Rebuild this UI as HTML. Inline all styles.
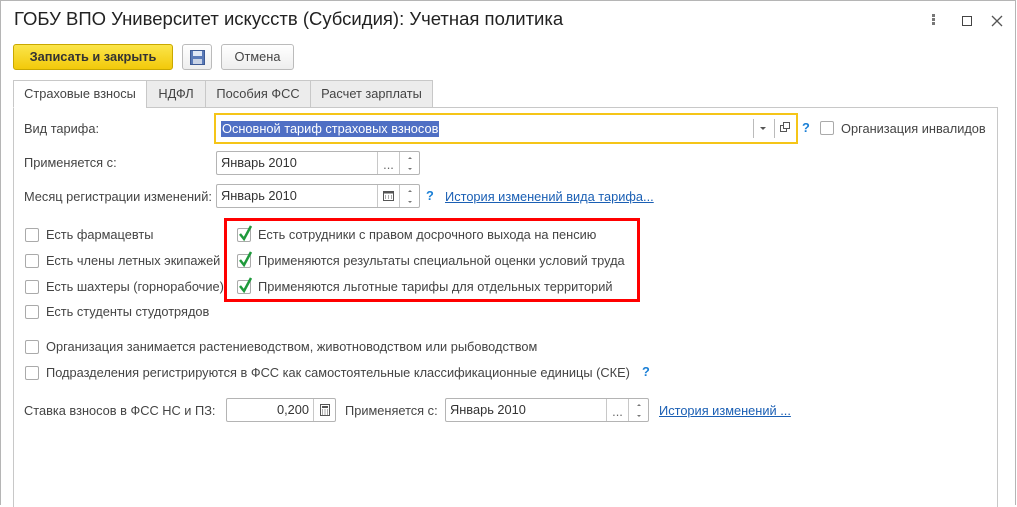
<!DOCTYPE html>
<html><head><meta charset="utf-8"><style>
*{box-sizing:border-box}
body{margin:0;width:1017px;height:505px;background:#fff;font-family:"Liberation Sans",sans-serif;font-size:12.8px;color:#444;position:relative;overflow:hidden}
.a{position:absolute;white-space:nowrap}
.win{position:absolute;left:0;top:0;width:1016px;height:505px;border:1px solid #b5b5b5;border-bottom:none}
.panel{position:absolute;left:13px;top:107px;width:985px;height:400px;border:1px solid #c8c8c8;border-bottom:none}
.tab{position:absolute;top:80px;height:28px;border:1px solid #c8c8c8;background:#ececec;text-align:center;line-height:26px;color:#444}
.tab.on{background:#fff;border-bottom-color:#fff;height:28px}
.inp{position:absolute;border:1px solid #b4b4b4;border-radius:2px;background:#fff;height:24px;line-height:22px;padding-left:4px;color:#333}
.btn{position:absolute;top:0;bottom:0;border-left:1px solid #c8c8c8;text-align:center;color:#666}
.cb{position:absolute;width:14px;height:14px;border:1px solid #aaa;border-radius:2px;background:#fff}
.lnk{color:#1a5fb4;text-decoration:underline}
.q{color:#1a7fd6;font-weight:bold}
</style></head><body>
<div class="win"></div>
<div class="a" style="left:14px;top:8px;font-size:18.5px;color:#222">ГОБУ ВПО Университет искусств (Субсидия): Учетная политика</div>
<div class="a" style="left:932px;top:14px;width:3px;height:3px;background:#777;box-shadow:0 4px 0 #777,0 8px 0 #777"></div>
<div class="a" style="left:962px;top:16px;width:10px;height:10px;border:1.5px solid #444"></div>
<svg class="a" style="left:991px;top:15px" width="12" height="12"><path d="M1 1L11 11M11 1L1 11" stroke="#555" stroke-width="1.3"/></svg>

<div class="a" style="left:13px;top:44px;width:160px;height:26px;background:linear-gradient(#fbe54a,#f2c90a);border:1px solid #c9a800;border-radius:3px;font-weight:bold;color:#333;text-align:center;line-height:24px">Записать и закрыть</div>
<div class="a" style="left:182px;top:44px;width:30px;height:26px;border:1px solid #bbb;border-radius:3px;background:linear-gradient(#fff,#eee)">
<svg style="position:absolute;left:7px;top:5px" width="15" height="15"><rect x="0.5" y="0.5" width="14" height="14" fill="#5a7ab8" stroke="#3d5a95"/><rect x="3" y="1" width="9" height="5" fill="#dfe7f5"/><rect x="3" y="9" width="9" height="5" fill="#c9d3e6"/></svg></div>
<div class="a" style="left:221px;top:44px;width:73px;height:26px;border:1px solid #bbb;border-radius:3px;background:linear-gradient(#fff,#eee);text-align:center;line-height:24px;color:#444">Отмена</div>

<div class="panel"></div>
<div class="tab on" style="left:13px;width:134px">Страховые взносы</div>
<div class="tab" style="left:146px;width:60px">НДФЛ</div>
<div class="tab" style="left:205px;width:106px">Пособия ФСС</div>
<div class="tab" style="left:310px;width:123px">Расчет зарплаты</div>

<div class="a" style="left:24px;top:121px">Вид тарифа:</div>
<div class="a" style="left:214px;top:113px;width:584px;height:31px;border:2px solid #f5c518;background:#fff">
<span style="position:absolute;left:5px;top:6px;background:#4f6fc4;color:#fff;line-height:16px;padding:0 1px">Основной тариф страховых взносов</span>
<div style="position:absolute;left:537px;top:4px;width:1px;height:19px;background:#bbb"></div>
<svg style="position:absolute;left:543px;top:11px" width="8" height="5"><path d="M1 1H7L4 4Z" fill="#555"/></svg>
<div style="position:absolute;left:558px;top:4px;width:1px;height:19px;background:#bbb"></div>
<svg style="position:absolute;left:564px;top:7px" width="11" height="11"><rect x="3.5" y="0.5" width="6" height="6" fill="none" stroke="#555"/><path d="M3.5 3.5H0.5V9.5H6.5V6.5" fill="none" stroke="#555"/></svg>
</div>
<div class="a q" style="left:802px;top:120px">?</div>
<div class="cb" style="left:820px;top:121px"></div>
<div class="a" style="left:841px;top:121px">Организация инвалидов</div>

<div class="a" style="left:24px;top:155px">Применяется с:</div>
<div class="inp" style="left:216px;top:151px;width:204px">Январь 2010
<div class="btn" style="left:160px;width:22px;line-height:26px">...</div>
<div class="btn" style="left:182px;width:21px"><svg style="position:absolute;left:7px;top:4px" width="6" height="16"><path d="M1 3H5L3 1ZM1 12H5L3 14Z" fill="#777"/></svg></div></div>

<div class="a" style="left:24px;top:189px">Месяц регистрации изменений:</div>
<div class="inp" style="left:216px;top:184px;width:204px">Январь 2010
<div class="btn" style="left:160px;width:22px"><svg style="position:absolute;left:5px;top:5px" width="11" height="11"><rect x="0.5" y="1.5" width="10" height="9" fill="none" stroke="#555"/><rect x="0.5" y="1.5" width="10" height="2" fill="#555"/><path d="M2 6h1M5 6h1M8 6h1M2 8h1M5 8h1M8 8h1" stroke="#555"/></svg></div>
<div class="btn" style="left:182px;width:21px"><svg style="position:absolute;left:7px;top:4px" width="6" height="16"><path d="M1 3H5L3 1ZM1 12H5L3 14Z" fill="#777"/></svg></div></div>
<div class="a q" style="left:426px;top:188px">?</div>
<div class="a lnk" style="left:445px;top:189px">История изменений вида тарифа...</div>

<div class="cb" style="left:25px;top:228px"></div><div class="a" style="left:46px;top:227px">Есть фармацевты</div>
<div class="cb" style="left:25px;top:254px"></div><div class="a" style="left:46px;top:253px">Есть члены летных экипажей</div>
<div class="cb" style="left:25px;top:280px"></div><div class="a" style="left:46px;top:279px">Есть шахтеры (горнорабочие)</div>
<div class="cb" style="left:25px;top:305px"></div><div class="a" style="left:46px;top:304px">Есть студенты студотрядов</div>

<div class="a" style="left:224px;top:218px;width:416px;height:84px;border:3px solid #f00;background:#fff"></div>
<div class="cb" style="left:237px;top:228px"></div><svg class="a" style="left:237px;top:224px" width="16" height="18"><path d="M3 10L7 15L14 2" fill="none" stroke="#1f9a3c" stroke-width="2.5"/></svg><div class="a" style="left:258px;top:227px">Есть сотрудники с правом досрочного выхода на пенсию</div>
<div class="cb" style="left:237px;top:254px"></div><svg class="a" style="left:237px;top:250px" width="16" height="18"><path d="M3 10L7 15L14 2" fill="none" stroke="#1f9a3c" stroke-width="2.5"/></svg><div class="a" style="left:258px;top:253px">Применяются результаты специальной оценки условий труда</div>
<div class="cb" style="left:237px;top:280px"></div><svg class="a" style="left:237px;top:276px" width="16" height="18"><path d="M3 10L7 15L14 2" fill="none" stroke="#1f9a3c" stroke-width="2.5"/></svg><div class="a" style="left:258px;top:279px">Применяются льготные тарифы для отдельных территорий</div>

<div class="cb" style="left:25px;top:340px"></div><div class="a" style="left:46px;top:339px">Организация занимается растениеводством, животноводством или рыбоводством</div>
<div class="cb" style="left:25px;top:366px"></div><div class="a" style="left:46px;top:365px">Подразделения регистрируются в ФСС как самостоятельные классификационные единицы (СКЕ)</div>
<div class="a q" style="left:642px;top:364px">?</div>

<div class="a" style="left:24px;top:403px">Ставка взносов в ФСС НС и ПЗ:</div>
<div class="inp" style="left:226px;top:398px;width:110px;text-align:right;padding-right:26px">0,200
<div class="btn" style="left:86px;width:23px"><svg style="position:absolute;left:6px;top:5px" width="10" height="12"><rect x="0.5" y="0.5" width="9" height="11" fill="none" stroke="#555"/><rect x="2" y="2" width="6" height="2" fill="#555"/><path d="M2 6h1M4.5 6h1M7 6h1M2 8h1M4.5 8h1M7 8h1M2 10h1M4.5 10h1M7 10h1" stroke="#555"/></svg></div></div>
<div class="a" style="left:345px;top:403px">Применяется с:</div>
<div class="inp" style="left:445px;top:398px;width:204px">Январь 2010
<div class="btn" style="left:160px;width:22px;line-height:26px">...</div>
<div class="btn" style="left:182px;width:21px"><svg style="position:absolute;left:7px;top:4px" width="6" height="16"><path d="M1 3H5L3 1ZM1 12H5L3 14Z" fill="#777"/></svg></div></div>
<div class="a lnk" style="left:659px;top:403px">История изменений ...</div>
</body></html>
